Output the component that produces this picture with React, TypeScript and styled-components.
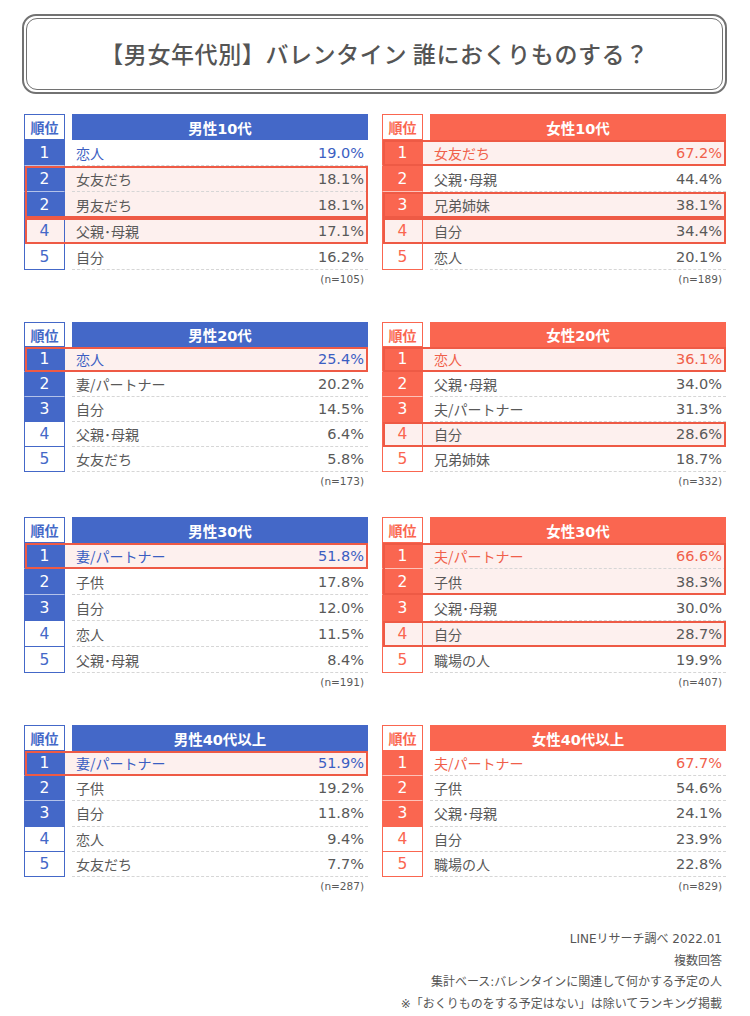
import React from "react";
import styled, { createGlobalStyle } from "styled-components";

const BLUE = "#4468c8";
const BLUE_TEXT = "#3b5ec2";
const CORAL = "#fa6650";
const CORAL_TEXT = "#f0604a";
const HL = "#ee5a45";
const PINK = "#fdf0ee";
const GRAY = "#595959";

const GlobalStyle = createGlobalStyle`
  html, body { margin: 0; padding: 0; background: #fff; }
  body {
    font-family: "DejaVu Sans", "Noto Sans CJK JP", sans-serif;
    color: ${GRAY};
  }
`;

type Item = { label: string; value: string; rank: number };
type PanelData = {
  title: string;
  kind: "m" | "f";
  n: number;
  items: Item[];
  groups: number[][];
};
type SectionData = { top: number; head: number; row: number; panels: PanelData[] };

const mk = (rows: [string, string, number][]): Item[] =>
  rows.map(([label, value, rank]) => ({ label, value, rank }));

const PARENTS = "父親･母親";

const sections: SectionData[] = [
  {
    top: 20,
    head: 26,
    row: 26,
    panels: [
      {
        title: "男性10代",
        kind: "m",
        n: 105,
        items: mk([
          ["恋人", "19.0%", 1],
          ["女友だち", "18.1%", 2],
          ["男友だち", "18.1%", 2],
          [PARENTS, "17.1%", 4],
          ["自分", "16.2%", 5],
        ]),
        groups: [[1, 2], [3]],
      },
      {
        title: "女性10代",
        kind: "f",
        n: 189,
        items: mk([
          ["女友だち", "67.2%", 1],
          [PARENTS, "44.4%", 2],
          ["兄弟姉妹", "38.1%", 3],
          ["自分", "34.4%", 4],
          ["恋人", "20.1%", 5],
        ]),
        groups: [[0], [2], [3]],
      },
    ],
  },
  {
    top: 32,
    head: 25,
    row: 25,
    panels: [
      {
        title: "男性20代",
        kind: "m",
        n: 173,
        items: mk([
          ["恋人", "25.4%", 1],
          ["妻/パートナー", "20.2%", 2],
          ["自分", "14.5%", 3],
          [PARENTS, "6.4%", 4],
          ["女友だち", "5.8%", 5],
        ]),
        groups: [[0]],
      },
      {
        title: "女性20代",
        kind: "f",
        n: 332,
        items: mk([
          ["恋人", "36.1%", 1],
          [PARENTS, "34.0%", 2],
          ["夫/パートナー", "31.3%", 3],
          ["自分", "28.6%", 4],
          ["兄弟姉妹", "18.7%", 5],
        ]),
        groups: [[0], [3]],
      },
    ],
  },
  {
    top: 25,
    head: 26,
    row: 26,
    panels: [
      {
        title: "男性30代",
        kind: "m",
        n: 191,
        items: mk([
          ["妻/パートナー", "51.8%", 1],
          ["子供", "17.8%", 2],
          ["自分", "12.0%", 3],
          ["恋人", "11.5%", 4],
          [PARENTS, "8.4%", 5],
        ]),
        groups: [[0]],
      },
      {
        title: "女性30代",
        kind: "f",
        n: 407,
        items: mk([
          ["夫/パートナー", "66.6%", 1],
          ["子供", "38.3%", 2],
          [PARENTS, "30.0%", 3],
          ["自分", "28.7%", 4],
          ["職場の人", "19.9%", 5],
        ]),
        groups: [[0, 1], [3]],
      },
    ],
  },
  {
    top: 32,
    head: 26,
    row: 25.2,
    panels: [
      {
        title: "男性40代以上",
        kind: "m",
        n: 287,
        items: mk([
          ["妻/パートナー", "51.9%", 1],
          ["子供", "19.2%", 2],
          ["自分", "11.8%", 3],
          ["恋人", "9.4%", 4],
          ["女友だち", "7.7%", 5],
        ]),
        groups: [[0]],
      },
      {
        title: "女性40代以上",
        kind: "f",
        n: 829,
        items: mk([
          ["夫/パートナー", "67.7%", 1],
          ["子供", "54.6%", 2],
          [PARENTS, "24.1%", 3],
          ["自分", "23.9%", 4],
          ["職場の人", "22.8%", 5],
        ]),
        groups: [],
      },
    ],
  },
];

const Page = styled.div`
  width: 750px;
  padding-top: 14px;
  box-sizing: border-box;
`;

const TitleOuter = styled.div`
  margin: 0 23px 0 22px;
  height: 80px;
  box-sizing: border-box;
  border: 2px solid #727272;
  border-radius: 14px;
  padding: 2px;
`;

const TitleInner = styled.div`
  height: 100%;
  box-sizing: border-box;
  border: 1.5px solid #727272;
  border-radius: 11px;
  display: flex;
  align-items: center;
  justify-content: center;
  font-family: "Noto Sans CJK JP", sans-serif;
  font-size: 23px;
  font-weight: 500;
  letter-spacing: 0.6px;
  color: #555;
  padding-bottom: 2px;
`;

const Section = styled.div<{ $top: number }>`
  display: grid;
  grid-template-columns: 344px 344px;
  column-gap: 14px;
  padding-left: 24px;
  margin-top: ${(p) => p.$top}px;
`;

const PanelBox = styled.div`
  display: flex;
  flex-direction: column;
`;

const HeadRow = styled.div<{ $h: number }>`
  display: flex;
  gap: 7px;
  height: ${(p) => p.$h}px;
`;

const RankHead = styled.div<{ $c: string }>`
  width: 41px;
  box-sizing: border-box;
  border: 1px solid ${(p) => p.$c};
  color: ${(p) => p.$c};
  display: flex;
  align-items: center;
  justify-content: center;
  font-family: "Noto Sans CJK JP", sans-serif;
  font-size: 14px;
  font-weight: 700;
  background: #fff;
`;

const TitleHead = styled.div<{ $c: string }>`
  flex: 1;
  background: ${(p) => p.$c};
  color: #fff;
  display: flex;
  align-items: center;
  justify-content: center;
  font-size: 14.5px;
  font-weight: 700;
`;

const Highlight = styled.div`
  position: relative;
  z-index: 1;
  background: ${PINK};
  &::after {
    content: "";
    position: absolute;
    inset: 0 0 0 1px;
    border: 2px solid ${HL};
    pointer-events: none;
  }
`;

const Row = styled.div<{ $h: number }>`
  display: flex;
  gap: 7px;
  height: ${(p) => p.$h}px;
`;

const RankCell = styled.div<{ $c: string; $filled: boolean; $lightSep: boolean }>`
  width: 41px;
  box-sizing: border-box;
  border-style: solid;
  border-width: 0 1px 1px 1px;
  border-color: ${(p) => p.$c};
  border-bottom-color: ${(p) => (p.$lightSep ? "rgba(255,255,255,0.6)" : p.$c)};
  background: ${(p) => (p.$filled ? p.$c : "transparent")};
  color: ${(p) => (p.$filled ? "#fff" : p.$c)};
  display: flex;
  align-items: center;
  justify-content: center;
  font-size: 15.5px;
`;

const DataCell = styled.div<{ $accent?: string }>`
  flex: 1;
  box-sizing: border-box;
  display: flex;
  align-items: center;
  justify-content: space-between;
  padding: 0 4px;
  border-bottom: 1px dashed #d6d6d6;
  font-size: 14px;
  color: ${(p) => p.$accent || GRAY};
`;

const Label = styled.span`
  font-family: "Noto Sans CJK JP", sans-serif;
`;

const Value = styled.span`
  font-family: "DejaVu Sans", sans-serif;
  font-size: 14.5px;
`;

const Sample = styled.div`
  height: 20px;
  line-height: 18px;
  text-align: right;
  padding-right: 4px;
  font-size: 10.5px;
  color: ${GRAY};
`;

const Footer = styled.div`
  margin-top: 32px;
  padding-right: 28px;
  text-align: right;
  font-size: 12px;
  line-height: 21.7px;
  color: #555;
`;

function Panel({ data, head, row }: { data: PanelData; head: number; row: number }) {
  const color = data.kind === "m" ? BLUE : CORAL;
  const accent = data.kind === "m" ? BLUE_TEXT : CORAL_TEXT;

  const renderRow = (i: number) => {
    const it = data.items[i];
    const filled = i < 3;
    const nextFilled = i + 1 < 3;
    return (
      <Row key={i} $h={row}>
        <RankCell $c={color} $filled={filled} $lightSep={filled && nextFilled}>
          {it.rank}
        </RankCell>
        <DataCell $accent={i === 0 ? accent : undefined}>
          <Label>{it.label}</Label>
          <Value>{it.value}</Value>
        </DataCell>
      </Row>
    );
  };

  const blocks: React.ReactNode[] = [];
  let i = 0;
  while (i < data.items.length) {
    const g = data.groups.find((gr) => gr[0] === i);
    if (g) {
      blocks.push(<Highlight key={`g${i}`}>{g.map((idx) => renderRow(idx))}</Highlight>);
      i = g[g.length - 1] + 1;
    } else {
      blocks.push(renderRow(i));
      i += 1;
    }
  }

  return (
    <PanelBox>
      <HeadRow $h={head}>
        <RankHead $c={color}>順位</RankHead>
        <TitleHead $c={color}>{data.title}</TitleHead>
      </HeadRow>
      {blocks}
      <Sample>(n={data.n})</Sample>
    </PanelBox>
  );
}

export default function App() {
  return (
    <>
      <GlobalStyle />
      <Page>
        <TitleOuter>
          <TitleInner>【男女年代別】バレンタイン 誰におくりものする？</TitleInner>
        </TitleOuter>
        {sections.map((s, si) => (
          <Section key={si} $top={s.top}>
            {s.panels.map((p) => (
              <Panel key={p.title} data={p} head={s.head} row={s.row} />
            ))}
          </Section>
        ))}
        <Footer>
          <div>LINEリサーチ調べ 2022.01</div>
          <div>複数回答</div>
          <div>集計ベース:バレンタインに関連して何かする予定の人</div>
          <div>※「おくりものをする予定はない」は除いてランキング掲載</div>
        </Footer>
      </Page>
    </>
  );
}
